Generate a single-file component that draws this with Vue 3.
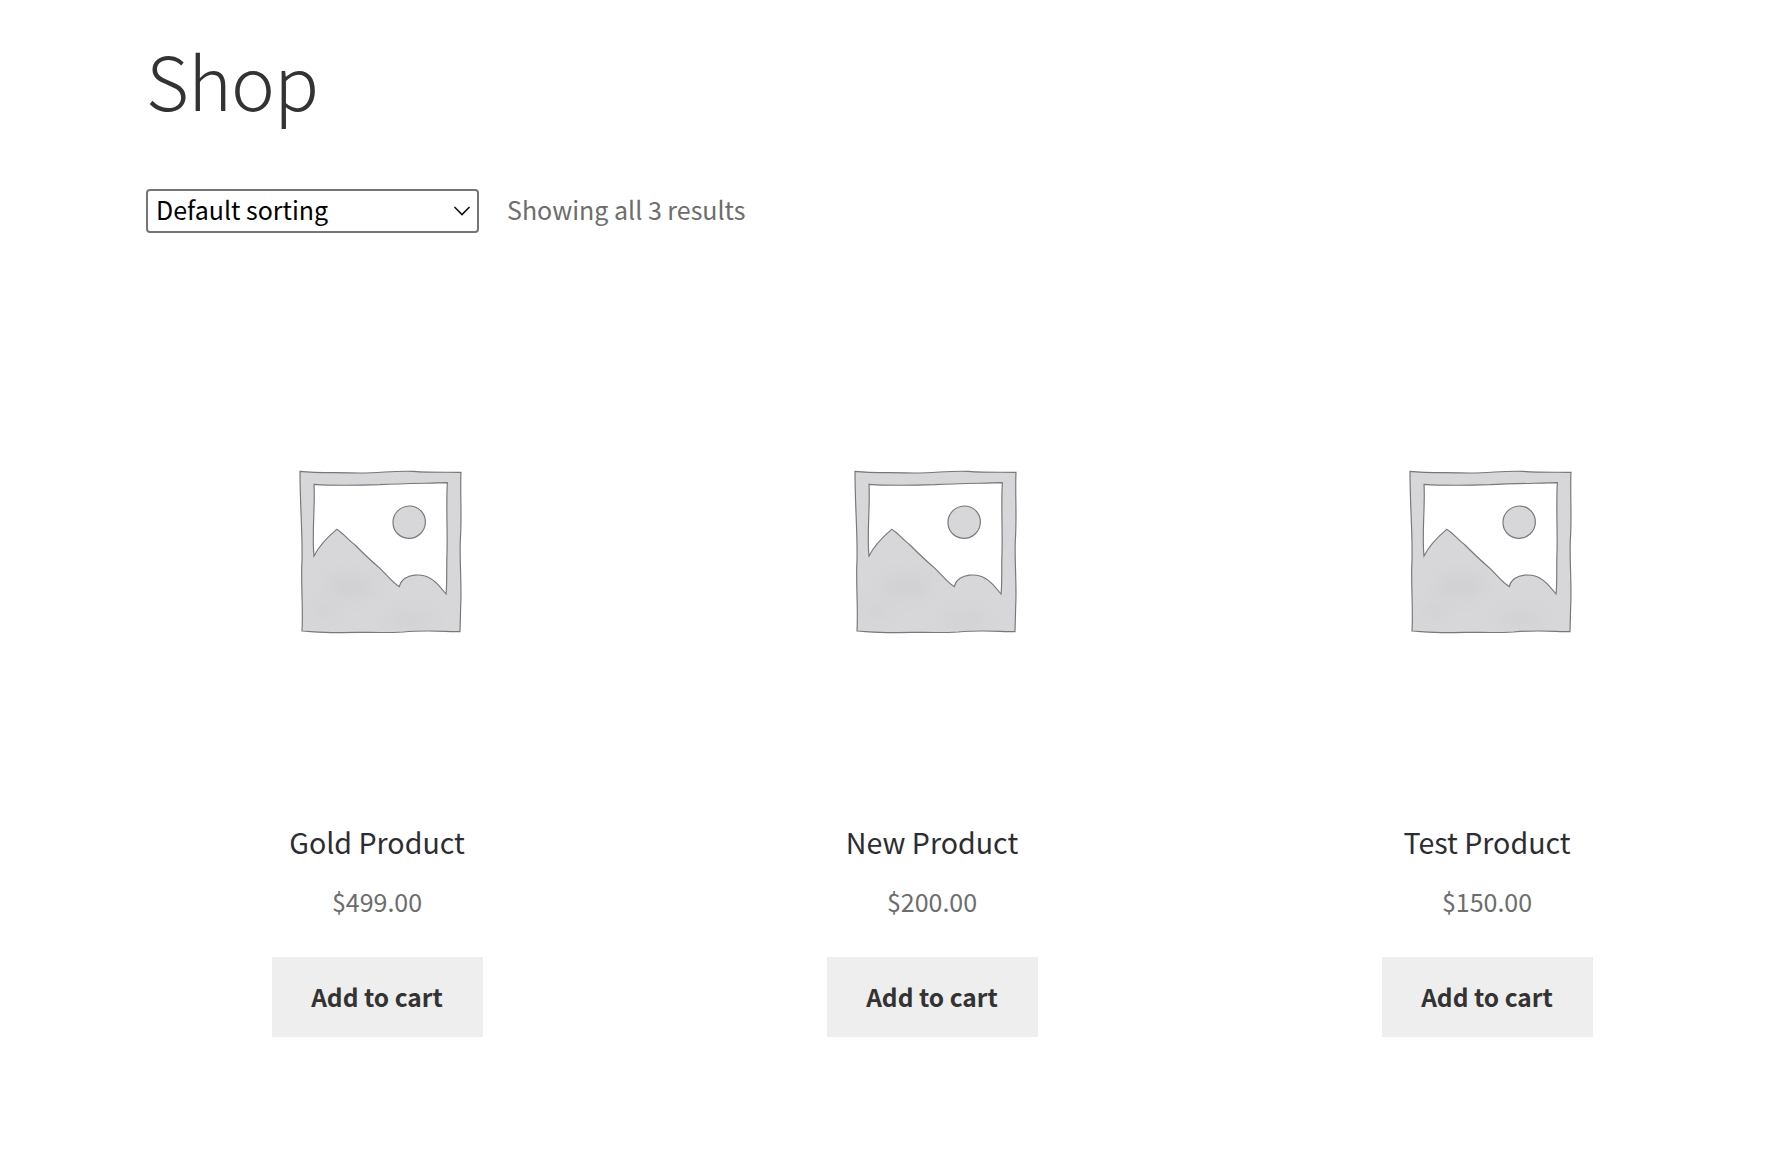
<script setup>
const products = [
  { name: 'Gold Product', price: '$499.00' },
  { name: 'New Product', price: '$200.00' },
  { name: 'Test Product', price: '$150.00' }
]
</script>

<template>
  <div class="page">
    <h1 class="title">Shop</h1>
    <div class="toolbar">
      <div class="select">
        <span class="select-text">Default sorting</span>
        <svg class="chev" width="18" height="10" viewBox="0 0 18 10"><path d="M1.5 1 L9 8.5 L16.5 1" fill="none" stroke="#111" stroke-width="1.6"/></svg>
      </div>
      <p class="count">Showing all 3 results</p>
    </div>
    <ul class="grid">
      <li v-for="p in products" :key="p.name" class="card">
        <svg class="thumb" viewBox="-402 -387 1386 1386">
          <defs>
            <filter id="soft" x="-5%" y="-5%" width="110%" height="110%"><feGaussianBlur stdDeviation="1.1"/></filter>
            <filter id="blot" x="-20%" y="-20%" width="140%" height="140%"><feGaussianBlur stdDeviation="20"/></filter>
            <clipPath id="ground">
              <path d="M66 330 L102 318 L170 238 L358 410 L435 378 L498 432 L540 432 L540 545 L66 545 Z"/>
            </clipPath>
          </defs>
          <g filter="url(#soft)">
            <path fill="#d7d7d9" stroke="#77777c" stroke-width="3.5" fill-rule="evenodd" d="M60 64 C120 70 170 66 240 69 C310 68 340 62 400 64 C450 68 500 66 543 67 C540 130 546 200 541 270 C538 340 546 400 542 470 L540 545 C480 544 430 540 370 546 C300 550 240 545 180 548 C140 549 100 545 66 543 C70 470 62 400 66 330 C68 250 60 170 60 64 Z M102 103 C160 107 230 106 300 104 C370 100 440 100 502 98 C498 170 503 240 501 310 C499 360 502 400 498 432 C480 410 460 385 435 378 C415 372 390 375 375 385 C365 392 360 402 358 410 C340 400 320 375 300 355 C270 330 245 305 225 285 C205 270 190 250 170 238 C150 255 118 285 102 318 C95 250 106 170 102 103 Z"/>
            <path fill="#d7d7d9" stroke="#77777c" stroke-width="3.5" d="M387 168 C415 167 437 190 436 218 C435 245 412 266 385 265 C358 264 338 242 339 215 C340 190 360 169 387 168 Z"/>
          </g>
          <g clip-path="url(#ground)">
            <g filter="url(#blot)" fill="#cdcdd0" opacity="0.55">
              <ellipse cx="210" cy="410" rx="70" ry="34"/>
              <ellipse cx="390" cy="505" rx="70" ry="18"/>
              <ellipse cx="130" cy="480" rx="35" ry="18"/>
            </g>
          </g>
        </svg>
        <h2 class="name">{{ p.name }}</h2>
        <span class="price">{{ p.price }}</span>
        <a class="btn"><span class="btn-text">Add to cart</span></a>
      </li>
    </ul>
  </div>
</template>

<style>
body { background: #fff; }
</style>
<style scoped>
.page {
  width: 1572px;
  height: 1156px;
  margin-left: 146px;
  box-sizing: border-box;
  overflow: hidden;
  font-family: "Noto Sans CJK SC", "Noto Sans", sans-serif;
  color: #6d6d6d;
}
.title {
  margin: 0;
  padding-top: 26px;
  font-size: 74px;
  line-height: 106px;
  font-weight: 300;
  color: #333;
  letter-spacing: -0.7px;
}
.toolbar {
  display: flex;
  align-items: center;
  gap: 28px;
  margin-top: 57px;
  height: 44px;
  line-height: 39px;
}
.select {
  width: 333px;
  height: 44px;
  box-sizing: border-box;
  border: 2px solid #757575;
  border-radius: 4px;
  padding: 0 6px 0 8px;
  display: flex;
  align-items: center;
  justify-content: space-between;
  font-size: 25px;
  color: #000;
}
.count { margin: 0 0 4px; font-size: 25px; }
.select-text { margin-bottom: 4px; }
.grid {
  list-style: none;
  margin: 88px 0 0;
  padding: 0;
  display: grid;
  grid-template-columns: repeat(3, 462px);
  column-gap: 93px;
}
.card {
  display: flex;
  flex-direction: column;
  align-items: center;
}
.thumb { width: 462px; height: 462px; display: block; }
.name {
  margin: 37px 0 0;
  font-size: 28.6px;
  line-height: 44px;
  font-weight: 400;
  color: #2c2d33;
}
.price {
  margin-top: 17px;
  font-size: 25px;
  line-height: 40px;
}
.btn {
  margin-top: 36px;
  width: 211px;
  height: 80px;
  display: flex;
  align-items: center;
  justify-content: center;
  background: #eee;
  color: #333;
  font-size: 24.5px;
  font-weight: 600;
}
.btn-text { margin-bottom: 2px; }
</style>
